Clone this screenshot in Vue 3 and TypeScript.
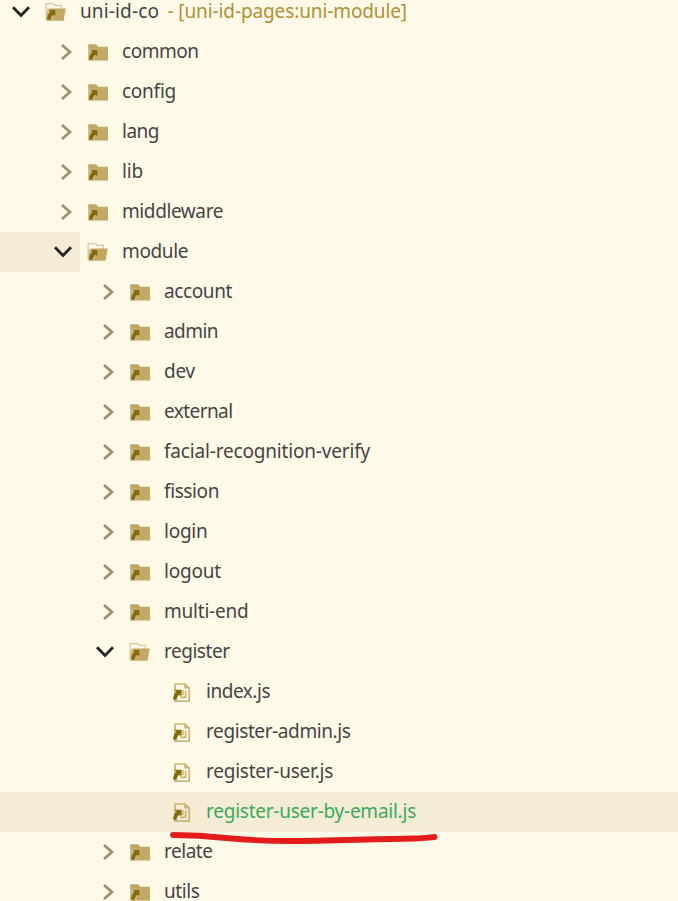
<script setup lang="ts">
type Kind = 'closed' | 'open' | 'file'
interface Node {
  name: string
  level: number
  kind: Kind
  width: number
  note?: string
  state?: 'focused' | 'selected'
}

const nodes: Node[] = [
  { name: 'uni-id-co', level: 0, kind: 'open', width: 79, note: '- [uni-id-pages:uni-module]' },
  { name: 'common', level: 1, kind: 'closed', width: 76.5 },
  { name: 'config', level: 1, kind: 'closed', width: 54 },
  { name: 'lang', level: 1, kind: 'closed', width: 37 },
  { name: 'lib', level: 1, kind: 'closed', width: 21 },
  { name: 'middleware', level: 1, kind: 'closed', width: 101 },
  { name: 'module', level: 1, kind: 'open', width: 66, state: 'focused' },
  { name: 'account', level: 2, kind: 'closed', width: 68 },
  { name: 'admin', level: 2, kind: 'closed', width: 54 },
  { name: 'dev', level: 2, kind: 'closed', width: 31 },
  { name: 'external', level: 2, kind: 'closed', width: 68.5 },
  { name: 'facial-recognition-verify', level: 2, kind: 'closed', width: 206 },
  { name: 'fission', level: 2, kind: 'closed', width: 55 },
  { name: 'login', level: 2, kind: 'closed', width: 43.5 },
  { name: 'logout', level: 2, kind: 'closed', width: 57 },
  { name: 'multi-end', level: 2, kind: 'closed', width: 84.5 },
  { name: 'register', level: 2, kind: 'open', width: 65.5 },
  { name: 'index.js', level: 3, kind: 'file', width: 64 },
  { name: 'register-admin.js', level: 3, kind: 'file', width: 144.5 },
  { name: 'register-user.js', level: 3, kind: 'file', width: 127 },
  { name: 'register-user-by-email.js', level: 3, kind: 'file', width: 210, state: 'selected' },
  { name: 'relate', level: 2, kind: 'closed', width: 48.5 },
  { name: 'utils', level: 2, kind: 'closed', width: 35.5 },
]

// Letter spacing that makes a label fill its column width.
const ctx = document.createElement('canvas').getContext('2d')!
ctx.font = '19px "Noto Sans"'
function tracking(text: string, width: number): string {
  return ((width - ctx.measureText(text).width) / text.length).toFixed(3) + 'px'
}
</script>

<template>
  <main class="tree">
    <div v-for="node in nodes" :key="node.name" class="row" :class="node.state">
      <div class="toggle" :style="{ width: 38 + node.level * 42 + 'px' }">
        <svg v-if="node.kind === 'open'" class="chevron-open" width="20" height="14" viewBox="0 0 20 14">
          <path d="M2 2.2L10 10.5L18 2.2" />
        </svg>
        <svg v-else-if="node.kind === 'closed'" class="chevron" width="12" height="18" viewBox="0 0 12 18">
          <path d="M2 2L10 9L2 16" />
        </svg>
      </div>
      <svg class="icon" width="22" height="22" viewBox="0 0 22 22">
        <template v-if="node.kind === 'closed'">
          <path class="fill" d="M1.3 3.2H9.2L11.2 5.7H21V19.5H1.3z" />
          <path class="halo" d="M2.5 7.8H11V16.5L8.4 14.8L7 19.5H1.3V13z" />
        </template>
        <template v-else-if="node.kind === 'open'">
          <path class="back" d="M1.1 19V2.7H8.2L10 4.3H16.3V8" />
          <path class="fill" d="M4.8 7.4H20.8L18.6 19.7H1.3z" />
          <path class="halo" d="M2.5 7.8H11V16.5L8.4 14.8L7 19.7H1.3V13z" />
        </template>
        <template v-else>
          <path class="page" d="M4 10V3H14L18.2 7.2V20.2H4z" />
          <path class="corner" d="M13.2 3.3V7.5H17.8z" />
          <path class="script" d="M14.6 9.5V16.3H9.2M11.8 9V14" />
        </template>
        <path class="arrow" d="M3.6 8.7H10.5V15.5L8.6 13.8C6.8 14.9 5.8 16.3 5.6 19L2.2 18.6C1.8 15.2 3.2 12.8 5.4 10.8z" />
      </svg>
      <span class="label" :style="{ letterSpacing: tracking(node.name, node.width) }">{{ node.name }}</span>
      <span v-if="node.note" class="note" :style="{ letterSpacing: tracking(node.note, 239.5) }">{{ node.note }}</span>
      <svg v-if="node.state === 'selected'" class="mark" width="270" height="16" viewBox="0 0 270 16">
        <path d="M3 3C17 3 38 4 56 6C82 8.5 92 9 120 9C160 9 200 7 244 6.5C252 6.4 258 5.6 264.5 5" />
      </svg>
    </div>
  </main>
</template>

<style>
body {
  background: #fff9e8;
  overflow: hidden;
}
</style>

<style scoped>
.tree {
  height: 901px;
  overflow: hidden;
  background: #fff9e8;
  color: #454545;
  font: 19px/38px "Noto Sans", sans-serif;
}
.row {
  position: relative;
  display: flex;
  align-items: center;
  height: 40px;
  white-space: pre;
}
.row:first-child {
  margin-top: -8px;
}
.toggle {
  display: flex;
  flex: none;
  align-items: center;
  justify-content: flex-end;
  height: 40px;
}
.focused .toggle,
.selected {
  background: #f4ecd4;
}
.selected .label {
  color: #3aaa5c;
}
.chevron-open {
  margin-right: 7px;
}
.chevron {
  margin-right: 8px;
}
.chevron-open path,
.chevron path {
  fill: none;
  stroke: #282828;
  stroke-width: 2.8;
}
.chevron path {
  stroke: #9e906f;
}
.icon {
  flex: none;
  margin: 0 13px 0 7px;
}
.fill {
  fill: #c2a867;
}
.halo {
  fill: #d0bb83;
}
.back {
  fill: none;
  stroke: #d9c694;
  stroke-width: 1.2;
}
.page,
.script {
  fill: none;
  stroke: #ccb476;
  stroke-width: 1.7;
}
.corner {
  fill: #ccb476;
}
.arrow {
  fill: #876b08;
}
.label,
.note {
  flex: none;
  height: 40px;
}
.note {
  margin-left: 8.5px;
  color: #b28f35;
}
.mark {
  position: absolute;
  z-index: 1;
  left: 170px;
  top: 40px;
  overflow: visible;
}
.mark path {
  fill: none;
  stroke: #e51c1c;
  stroke-width: 5.8;
  stroke-linecap: round;
}
</style>
